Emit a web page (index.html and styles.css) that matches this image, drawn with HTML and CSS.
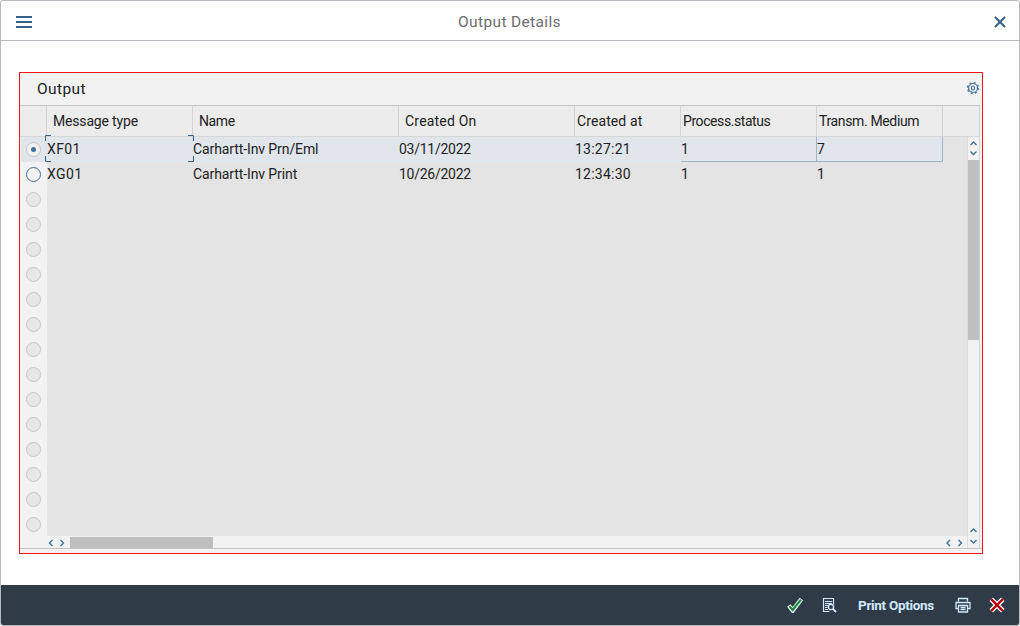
FILE: index.html
```
<!DOCTYPE html>
<html lang="en">
<head>
<meta charset="utf-8">
<title>Output Details</title>
<link rel="stylesheet" href="styles.css">
</head>
<body>
<div class="dialog">
  <header class="titlebar">
    <svg class="menu" width="16" height="12" viewBox="0 0 16 12"><path d="M0 1h16M0 6h16M0 11h16" stroke="#346187" stroke-width="2"/></svg>
    <h1>Output Details</h1>
    <svg class="close" width="12" height="12" viewBox="0 0 12 12"><path d="M1 1l10 10M11 1L1 11" stroke="#346187" stroke-width="2"/></svg>
  </header>
  <main>
    <section class="panel">
      <div class="panel-title"><h2>Output</h2>
        <svg class="gear" width="12" height="12" viewBox="0 0 12 12" fill="none" stroke="#457399"><circle cx="6" cy="6" r="4.500" stroke-width="1.200"/><circle cx="6" cy="6" r="5.500" stroke-width="1.200" stroke-dasharray="2.1 2.22"/><ellipse cx="6" cy="6" rx="1.6" ry="2" stroke-width="1.200"/></svg>
      </div>
      <div class="thead cols">
        <span></span><span class="pad type">Message type</span><span class="pad title">Name</span><span class="pad date">Created On</span><span class="time">Created at</span><span class="status">Process.status</span><span class="medium">Transm. Medium</span><span></span>
      </div>
      <div class="grid">
        <div class="radios">
          <i class="sel"><b></b></i><i class="on"><b></b></i><i><b></b></i><i><b></b></i><i><b></b></i><i><b></b></i><i><b></b></i><i><b></b></i><i><b></b></i><i><b></b></i><i><b></b></i><i><b></b></i><i><b></b></i><i><b></b></i><i><b></b></i><i><b></b></i>
        </div>
        <div class="rows">
          <div class="row selected"><span class="code focus">XF01<svg width="150" height="28" viewBox="0 0 150 28"><path d="M.5 6V.5H6M143 .5h5.500V6M.5 21v5.500H6M143 26.500h5.500V21" fill="none" stroke="#346187"/></svg></span><span class="name">Carhartt-Inv Prn/Eml</span><span class="day">03/11/2022</span><span class="clock">13:27:21</span><span class="ed">1</span><span class="ed last">7</span></div>
          <div class="row"><span class="code">XG01</span><span class="name">Carhartt-Inv Print</span><span class="day">10/26/2022</span><span class="clock">12:34:30</span><span>1</span><span>1</span></div>
        </div>
        <div class="vscroll">
          <svg width="11" height="23" viewBox="0 0 11 23"><path d="M2.500 8l3-3 3 3M2.500 14.500l3 3 3-3"/></svg>
          <div class="vthumb"></div>
          <svg class="vend" width="11" height="23" viewBox="0 0 11 23"><path d="M2.500 7l3-3 3 3M2.500 15l3 3 3-3"/></svg>
        </div>
      </div>
      <div class="hscroll">
        <svg width="23" height="11" viewBox="0 0 23 11"><path d="M5.500 3l-3 3 3 3M13.500 3l3 3-3 3"/></svg>
        <div class="hthumb"></div>
        <svg class="hend" width="23" height="11" viewBox="0 0 23 11"><path d="M5 3l-3 3 3 3M13.500 3l3 3-3 3"/></svg>
      </div>
    </section>
  </main>
  <footer>
    <svg width="16" height="16" viewBox="0 0 16 16"><path d="M1.800 8.500l3.900 5L14.400 2" fill="none" stroke="#e4f5f5" stroke-width="4.400"/><path d="M2.400 9.100l3.300 3.900L13.900 2.600" fill="none" stroke="#258342" stroke-width="2.200"/></svg>
    <svg class="preview" width="15" height="16" viewBox="0 0 15 16" fill="none" stroke="#d1e8ff"><path d="M7.500 14.500H1.500v-13h10v6M3 4.500h7M3 6.500h7M3 8.500h3M3 10.500h2.500M3 12.500h3" stroke-width="1.200"/><circle cx="9" cy="10" r="2.600" stroke-width="1.400"/><path d="M11 12l3 3" stroke-width="1.800"/></svg>
    <button>Print Options</button>
    <svg class="print" width="16" height="16" viewBox="0 0 16 16" fill="none" stroke="#d1e8ff" stroke-width="1.300"><path d="M3.500 4.500v-3h9v3M3.500 11.500h-2.500v-6h14v6h-2.500M3.500 8.500h9v6.500h-9zM5.500 10.500h5M5.500 12.500h5"/></svg>
    <svg class="cancel" width="16" height="16" viewBox="0 0 16 16"><path d="M2.200 2.200l11.600 11.600M13.800 2.200L2.200 13.800" stroke="#fff" stroke-width="5"/><path d="M2.200 2.200l11.600 11.600M13.800 2.200L2.200 13.800" stroke="#b8000d" stroke-width="2.400"/></svg>
  </footer>
</div>
</body>
</html>
```
FILE: styles.css
```
* { box-sizing: border-box; }
body { margin: 0; background: #fff; font-family: Roboto, "Liberation Sans", sans-serif; font-size: 14px; color: #222; }
svg { display: block; flex: none; }
h1, h2 { margin: 0; font-weight: 400; }
.dialog { width: 1020px; height: 626px; border: 1px solid #b8babf; border-radius: 3px; display: flex; flex-direction: column; overflow: hidden; }
.titlebar { height: 40px; flex: none; border-bottom: 1px solid #b8babf; display: flex; align-items: center; justify-content: space-between; padding: 3px 13px 0 15px; }
h1 { font-size: 15.5px; color: #6a6d70; letter-spacing: .35px; margin-right: 7px; }
main { flex: 1; padding: 31px 36px 0 18px; }
.panel { height: 482px; border: 1px solid #f91414; background: #f2f2f2; }
.panel-title { height: 33px; display: flex; align-items: center; justify-content: space-between; padding: 0 1px 2px 17px; border-bottom: 1px solid #c6c6c6; margin-right: 2px; }
h2 { font-size: 15.5px; letter-spacing: .4px; padding-top: 2px; }
.thead { height: 31px; margin-right: 2px; display: grid; grid-template-columns: 27px 146px 206px 176px 106px 136px 126px 1fr; background: #ececec; border-bottom: 1px solid #d7d7d7; line-height: 31px; }
.thead span { border-right: 1px solid #d3d3d3; padding-left: 2px; white-space: nowrap; height: 30px; }
.thead .pad { padding-left: 6px; }
.type { letter-spacing: -.17px; }
.title { letter-spacing: -.4px; }
.date { letter-spacing: .2px; }
.time { letter-spacing: .1px; }
.status { letter-spacing: -.42px; }
.medium { letter-spacing: -.36px; }
.grid { display: flex; height: 399px; margin-right: 2px; padding-left: 1px; }
.radios { width: 26px; }
.radios i { display: flex; height: 25px; align-items: center; justify-content: center; }
.radios b { width: 15px; height: 15px; border: 1px solid #c5c5c5; border-radius: 50%; background: #e7e7e7; }
.radios .sel { background: #e1e6ed; }
.sel b { display: flex; align-items: center; justify-content: center; background: #f2f2f2; }
.sel b::after { content: ""; width: 5px; height: 5px; border-radius: 50%; background: #427298; }
.on b { border-color: #427298; background: #f2f2f2; }
.rows { width: 921px; background: #e4e4e4; }
.row { display: grid; grid-template-columns: 146px 206px 176px 106px 136px 126px; grid-template-rows: 25px; width: 896px; height: 25px; line-height: 25px; }
.row span { white-space: nowrap; }
.code { letter-spacing: .4px; }
.name { letter-spacing: -.1px; }
.day { letter-spacing: -.25px; }
.clock { letter-spacing: .25px; }
.selected { background: #e1e6ed; }
.row .ed { border-bottom: 1px solid #9eb5cf; border-right: 1px solid #9eb5cf; }
.focus { position: relative; }
.focus svg { position: absolute; left: -2px; top: -2px; }
.vscroll { flex: 1; border-right: 1px solid #d3d3d3; border-left: 1px solid #ddd; height: 411px; display: flex; flex-direction: column; }
.vthumb { height: 180px; background: #bfbfbf; }
.vend { margin-top: auto; }
.vscroll path, .hscroll path { fill: none; stroke: #427298; stroke-width: 1.400; }
.hscroll { height: 13px; display: flex; padding: 1px 14px 0 27px; border-bottom: 1px solid #c6c6c6; }
.hthumb { width: 143px; height: 11px; background: #bfbfbf; }
.hend { margin-left: auto; }
footer { height: 40px; flex: none; background: #2f3c48; display: flex; align-items: center; padding-left: 786px; }
.preview { margin-left: 19px; }
button { margin-left: 21px; border: 0; padding: 0; background: none; color: #d1e8ff; font: bold 13.5px Roboto, "Liberation Sans", sans-serif; letter-spacing: -.3px; width: 79px; white-space: nowrap; text-align: left; }
.print { margin-left: 18px; }
.cancel { margin-left: 18px; overflow: visible; }
```
